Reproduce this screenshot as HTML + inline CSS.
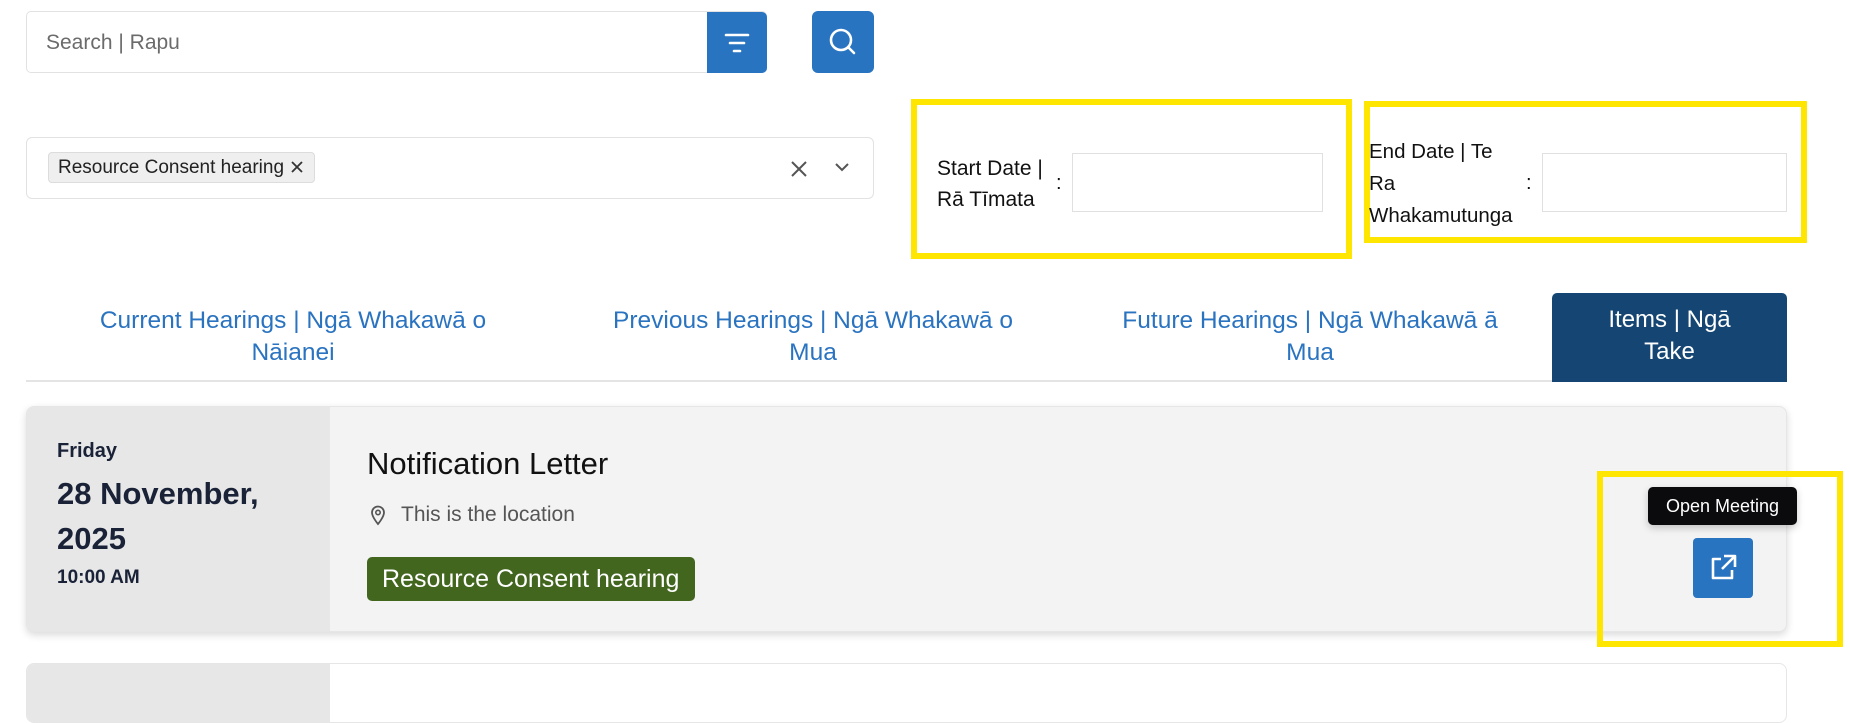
<!DOCTYPE html>
<html><head><meta charset="utf-8"><style>
*{box-sizing:border-box;margin:0;padding:0}
body{width:1850px;height:682px;background:#fff;font-family:"Liberation Sans",Arial,sans-serif;position:relative;overflow:hidden}
.a{position:absolute}
.yb{position:absolute;border:6px solid #ffe600}
.tab{position:absolute;top:303px;text-align:center;color:#2a73c0;font-size:24.5px;line-height:32px}
</style></head><body>
<!-- search -->
<div class="a" style="left:26px;top:11px;width:741px;height:62px;border:1px solid #e2e2e2;border-radius:5px"></div>
<div class="a" style="left:46px;top:31px;font-size:21px;color:#6b6b6b">Search | Rapu</div>
<div class="a" style="left:707px;top:12px;width:60px;height:61px;background:#2874c1;border-radius:0 5px 5px 0">
<svg width="60" height="61"><g stroke="#fff" stroke-width="2.6" stroke-linecap="round"><line x1="19" y1="23" x2="41" y2="23"/><line x1="23" y1="31" x2="37" y2="31"/><line x1="27" y1="39" x2="33" y2="39"/></g></svg></div>
<div class="a" style="left:812px;top:11px;width:62px;height:62px;background:#2874c1;border-radius:6px">
<svg width="62" height="62"><circle cx="29" cy="29" r="10" fill="none" stroke="#fff" stroke-width="2.6"/><line x1="36" y1="36" x2="42" y2="42" stroke="#fff" stroke-width="2.6" stroke-linecap="round"/></svg></div>
<!-- multiselect -->
<div class="a" style="left:26px;top:137px;width:848px;height:62px;border:1px solid #e2e2e2;border-radius:6px"></div>
<div class="a" style="left:48px;top:152px;width:267px;height:31px;background:#efefef;border:1px solid #dcdcdc;border-radius:4px;font-size:19px;line-height:29px;padding-left:9px;color:#222">Resource Consent hearing</div>
<svg class="a" style="left:289px;top:159px" width="16" height="16"><path d="M3 3L13 13M13 3L3 13" stroke="#333" stroke-width="1.8"/></svg>
<svg class="a" style="left:790px;top:160px" width="18" height="18"><path d="M2 2L16 16M16 2L2 16" stroke="#555" stroke-width="2"/></svg>
<svg class="a" style="left:834px;top:160px" width="16" height="14"><path d="M2 4L8 10L14 4" fill="none" stroke="#555" stroke-width="2"/></svg>
<!-- start date -->
<div class="yb" style="left:911px;top:99px;width:441px;height:160px"></div>
<div class="a" style="left:937px;top:153px;font-size:21px;line-height:31px;color:#111">Start Date |<br>Rā Tīmata</div>
<div class="a" style="left:1056px;top:172px;font-size:20px;color:#111">:</div>
<div class="a" style="left:1072px;top:153px;width:251px;height:59px;border:1px solid #e0e0e0"></div>
<!-- end date -->
<div class="yb" style="left:1364px;top:101px;width:443px;height:142px"></div>
<div class="a" style="left:1369px;top:136px;font-size:20.5px;line-height:32px;color:#111">End Date | Te<br>Ra<br>Whakamutunga</div>
<div class="a" style="left:1526px;top:172px;font-size:20px;color:#111">:</div>
<div class="a" style="left:1542px;top:153px;width:245px;height:59px;border:1px solid #e0e0e0"></div>
<!-- tabs -->
<div class="a" style="left:26px;top:380px;width:1761px;height:2px;background:#e4e4e4"></div>
<div class="tab" style="left:43px;width:500px;top:305px">Current Hearings | Ngā Whakawā o<br>Nāianei</div>
<div class="tab" style="left:563px;width:500px;top:305px">Previous Hearings | Ngā Whakawā o<br>Mua</div>
<div class="tab" style="left:1060px;width:500px;top:305px">Future Hearings | Ngā Whakawā ā<br>Mua</div>
<div class="a" style="left:1552px;top:293px;width:235px;height:89px;background:#154673;border-radius:5px 5px 0 0;color:#fff;font-size:24px;line-height:32px;text-align:center;padding-top:11px">Items | Ngā<br>Take</div>
<!-- card -->
<div class="a" style="left:26px;top:406px;width:1761px;height:226px;background:#f3f3f3;border-radius:8px;box-shadow:0 3px 8px rgba(0,0,0,.15);overflow:hidden;border:1px solid #e6e6e6">
<div class="a" style="left:0;top:0;width:303px;height:226px;background:#e7e7e7"></div>
</div>
<div class="a" style="left:57px;top:440px;font-size:20px;font-weight:bold;color:#1a2238">Friday</div>
<div class="a" style="left:57px;top:471px;font-size:31px;font-weight:bold;color:#1a2238;line-height:45px">28 November,<br>2025</div>
<div class="a" style="left:57px;top:567px;font-size:19px;font-weight:bold;color:#1a2238">10:00 AM</div>
<div class="a" style="left:367px;top:446px;font-size:31px;color:#111">Notification Letter</div>
<svg class="a" style="left:369px;top:504px" width="18" height="22"><path d="M9 20C9 20 3 13 3 8.5A6 6 0 0 1 15 8.5C15 13 9 20 9 20Z" fill="none" stroke="#555" stroke-width="1.8"/><circle cx="9" cy="8.5" r="2.2" fill="none" stroke="#555" stroke-width="1.6"/></svg>
<div class="a" style="left:401px;top:503px;font-size:21px;color:#555">This is the location</div>
<div class="a" style="left:367px;top:557px;width:328px;height:44px;background:#43661f;border-radius:5px;color:#fff;font-size:25px;line-height:44px;padding-left:15px">Resource Consent hearing</div>
<!-- open meeting -->
<div class="yb" style="left:1597px;top:471px;width:246px;height:176px"></div>
<div class="a" style="left:1648px;top:487px;width:149px;height:38px;background:#0b0b0d;border-radius:5px;color:#fff;font-size:18px;line-height:38px;text-align:center;box-shadow:0 3px 8px rgba(0,0,0,.2)">Open Meeting</div>
<div class="a" style="left:1693px;top:538px;width:60px;height:60px;background:#2874c1;border-radius:4px">
<svg width="60" height="60"><g fill="none" stroke="#fff" stroke-width="2.6" stroke-linejoin="round"><path d="M28 21H20V40H39V32"/><path d="M31 18H42V29M42 18L29 31"/></g></svg></div>
<!-- second card -->
<div class="a" style="left:26px;top:663px;width:1761px;height:60px;background:#fff;border:1px solid #e6e6e6;border-radius:8px;overflow:hidden">
<div class="a" style="left:0;top:0;width:303px;height:60px;background:#e7e7e7"></div></div>
</body></html>
